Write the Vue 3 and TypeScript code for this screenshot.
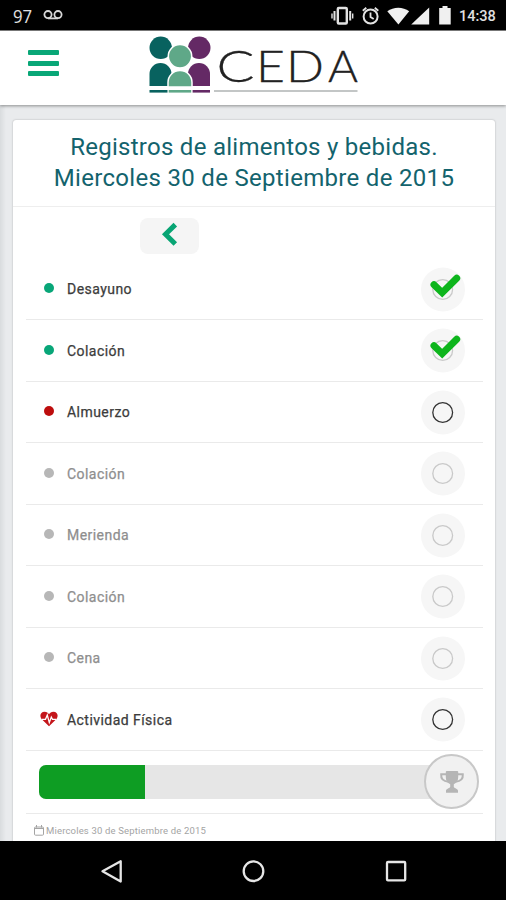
<script setup lang="ts">
type State = 'done' | 'open' | 'disabled'

interface Entry {
  label: string
  marker: 'green' | 'red' | 'grey' | 'heart'
  state: State
}

const entries: Entry[] = [
  { label: 'Desayuno', marker: 'green', state: 'done' },
  { label: 'Colación', marker: 'green', state: 'done' },
  { label: 'Almuerzo', marker: 'red', state: 'open' },
  { label: 'Colación', marker: 'grey', state: 'disabled' },
  { label: 'Merienda', marker: 'grey', state: 'disabled' },
  { label: 'Colación', marker: 'grey', state: 'disabled' },
  { label: 'Cena', marker: 'grey', state: 'disabled' },
  { label: 'Actividad Física', marker: 'heart', state: 'open' },
]

const progress = 26.4
</script>

<template>
  <div class="screen">
    <div class="status">
      <span class="temp">97</span>
      <svg class="voicemail" width="20" height="10" viewBox="0 0 20 10" fill="none" stroke="#d8d8d8" stroke-width="1.8">
        <circle cx="5" cy="4.6" r="3.6" /><circle cx="15" cy="4.6" r="3.6" /><path d="M5 8.4H15" />
      </svg>
      <svg class="system" width="120" height="20" viewBox="0 0 120 20">
        <g fill="none" stroke="#e2e2e2">
          <rect x="6.8" y="2" width="9" height="15.5" rx="1" stroke-width="2.4" />
          <path d="M3.5 5v9.500M19.200 5v9.500" stroke-width="2" />
          <path d="M1 7.500v5M21.700 7.500v5" stroke-width="1.4" />
          <circle cx="39.600" cy="10.500" r="7" stroke-width="2" />
          <path d="M39.500 6.500v4.500l3.200 2M31.800 4.800l3.500-3M47.300 4.800l-3.500-3" stroke-width="1.8" />
        </g>
        <g fill="#f0f0f0">
          <path d="M56.300 5.300C62.500.5 72 .5 78.200 5.300L67.400 18.500Z" />
          <path d="M98.200 1.500v17H80.200Z" />
          <path d="M111.500 0h5v2h3.200v16.500h-11.500V2h3.300Z" />
        </g>
      </svg>
      <span class="clock">14:38</span>
    </div>

    <header class="header">
      <button class="menu" aria-label="Menú"><i /><i /><i /></button>
      <svg class="logo" width="212" height="62" viewBox="0 0 212 62">
        <g fill="#08625f">
          <circle cx="12.700" cy="13.800" r="11.200" />
          <path d="M1.500 52V40a11 11 0 0 1 22 0V52Z" />
          <path d="M1.500 56h18v2.600h-18Z" />
        </g>
        <g fill="#642965">
          <circle cx="51.300" cy="13.800" r="11.200" />
          <path d="M40 52V40a11 11 0 0 1 22 0V52Z" />
          <path d="M44.600 56h17.400v2.600H44.600Z" />
        </g>
        <g fill="#5fa888" stroke="#fff" stroke-width="1.500">
          <circle cx="32" cy="22.200" r="11.700" />
          <path d="M20 53V48.500a12 12 0 0 1 24 0V53Z" />
        </g>
        <path d="M20.700 56h22.500v2.600H20.700Z" fill="#5fa888" />
        <path d="M66 57h143.500" stroke="#c3c6c6" stroke-width="1.800" />
        <g class="wordmark">
          <text x="68.500" y="47.500" textLength="38" lengthAdjust="spacingAndGlyphs">C</text>
          <text x="108" y="47.500" textLength="29" lengthAdjust="spacingAndGlyphs">E</text>
          <text x="138" y="47.500" textLength="38" lengthAdjust="spacingAndGlyphs">D</text>
          <text x="180" y="47.500" textLength="30" lengthAdjust="spacingAndGlyphs">A</text>
        </g>
      </svg>
    </header>

    <main class="content">
      <section class="card">
        <h1 class="title">
          <span class="line-one">Registros de alimentos y bebidas.</span>
          <span class="line-two">Miercoles 30 de Septiembre de 2015</span>
        </h1>
        <div class="pager">
          <button class="prev" aria-label="Anterior">
            <svg width="18" height="24" viewBox="0 0 18 24" fill="none" stroke="#08a574" stroke-width="5">
              <path d="M14.300 2.600L4.500 12.300L14.300 22" />
            </svg>
          </button>
        </div>
        <ul class="list">
          <li v-for="(entry, i) in entries" :key="i" class="row" :class="entry.state">
            <span class="marker">
              <svg v-if="entry.marker === 'heart'" width="18" height="16" viewBox="0 0 18 16">
                <path d="M9 15.300L1.500 7.900C-.8 5 .5.700 4.600.700C6.700.700 8 1.700 9 3.200C10 1.700 11.300.700 13.400.700C17.500.700 18.800 5 16.500 7.900Z" fill="#c4161b" />
                <path d="M2 8.300h3.500L7.300 4l2 7.600L11.300 6l1.200 2.300h3.500" fill="none" stroke="#fff" stroke-width="1.300" />
              </svg>
              <i v-else class="dot" :class="entry.marker" />
            </span>
            <span class="label">{{ entry.label }}</span>
            <span class="check">
              <svg width="44" height="52" viewBox="0 0 44 52">
                <circle cx="22" cy="26.500" r="22" fill="#f6f6f6" />
                <circle class="ring" cx="21.700" cy="26.500" r="9.900" />
                <path v-if="entry.state === 'done'" d="M13 21.800L21.200 29.700L35.700 15.300" fill="none" stroke="#0db51c" stroke-width="7" stroke-linecap="round" stroke-linejoin="miter" />
              </svg>
            </span>
          </li>
        </ul>
        <div class="goal">
          <div class="track"><div class="fill" :style="{ width: progress + '%' }" /></div>
          <div class="medal">
            <svg width="26" height="24" viewBox="0 0 26 24">
              <path d="M7 4.300H2.200C1.800 8.500 4.500 11.200 9.500 11.700M19 4.300h4.800C24.200 8.500 21.500 11.200 16.500 11.700" fill="none" stroke="#b5b5b5" stroke-width="2" />
              <path d="M6.800 2q0-1 1-1h10.400q1 0 1 1v5c0 3.500-1.500 5.800-4.400 7.200v2.600c0 1.600 4.200 1.700 4.200 4v2H7v-2c0-2.300 4.200-2.400 4.200-4v-2.600C8.300 12.800 6.800 10.500 6.800 7Z" fill="#b5b5b5" />
            </svg>
          </div>
        </div>
        <div class="date">
          <svg width="10" height="11" viewBox="0 0 10 11" fill="none" stroke="#a4a4a4">
            <rect x=".5" y="2" width="9" height="8.200" rx="1" /><path d="M.5 3.500h9M2.500 0v2.500M7.500 0v2.500" />
          </svg>
          <span>Miercoles 30 de Septiembre de 2015</span>
        </div>
      </section>
    </main>

    <nav class="nav">
      <svg width="506" height="59" viewBox="0 0 506 59" fill="none" stroke="#e6e6e6" stroke-width="2.300">
        <path d="M120.700 20.300V40.500L102.500 30.300Z" stroke-linejoin="round" />
        <circle cx="253.500" cy="30.200" r="9.800" />
        <rect x="387" y="21" width="18.200" height="18.400" rx="1" />
      </svg>
    </nav>
  </div>
</template>

<style>
body { margin: 0; background: #000; }
</style>

<style scoped>
.screen {
  width: 506px;
  height: 900px;
  display: flex;
  flex-direction: column;
  overflow: hidden;
  font-family: Roboto, "Liberation Sans", sans-serif;
}
.status {
  height: 30px;
  flex: none;
  display: flex;
  align-items: center;
  background: #000;
  color: #e0e0e0;
  padding: 0 9px 0 13px;
  box-sizing: border-box;
}
.temp { font: 18px/30px "Open Sans", sans-serif; transform: scaleX(.93); transform-origin: left; padding-top: 2px; }
.voicemail { margin-left: 9px; }
.system { margin-left: auto; margin-top: 1px; }
.clock { font-weight: 500; font-size: 14.500px; margin-left: 8px; padding-top: 3px; width: 38px; white-space: nowrap; }
.header {
  height: 75px;
  flex: none;
  display: flex;
  align-items: flex-start;
  box-sizing: border-box;
  background: #fff;
  border-top: 1px solid #777;
  box-shadow: 0 1px 3px rgba(0, 0, 0, .4);
  padding: 3px 0 0 28px;
  z-index: 1;
}
button { border: 0; padding: 0; background: none; }
.menu { width: 31px; margin-top: 16px; display: flex; flex-direction: column; gap: 5.500px; }
.menu i { height: 5px; background: #09a777; border-radius: 1px; }
.logo { margin-left: 89px; }
.wordmark {
  font-family: Lato, sans-serif;
  font-weight: 300;
  font-size: 44px;
  fill: #222;
  stroke: #222;
  stroke-width: .3;
}
.content {
  flex: 1;
  min-height: 0;
  overflow: hidden;
  background: linear-gradient(90deg, #d9dcde, #e9ebed 6px);
  padding: 15px 11px 0 13px;
}
.card {
  height: 740px;
  background: #fff;
  border-radius: 3px;
  box-shadow: 0 0 2px rgba(0, 0, 0, .28);
}
.title {
  height: 87px;
  box-sizing: border-box;
  margin: 0;
  padding-top: 12px;
  border-bottom: 1.500px solid #eee;
  color: #13636d;
  font-weight: 400;
  font-size: 24px;
  line-height: 31px;
  text-align: center;
  white-space: nowrap;
}
.title span { display: block; }
.line-one { letter-spacing: .27px; }
.line-two { letter-spacing: .31px; }
.pager { height: 51.500px; padding: 11px 0 0 127px; box-sizing: border-box; }
.prev {
  display: flex;
  justify-content: center;
  width: 59px;
  height: 36px;
  border-radius: 8px;
  background: #f5f5f5;
  padding-top: 4px;
}
.list { list-style: none; margin: 0 12px 0 13px; padding: 0; }
.row {
  height: 61.530px;
  box-sizing: border-box;
  border-bottom: 1.500px solid #eaeaea;
  display: flex;
  align-items: center;
  color: #3c3c3c;
}
.row.disabled { color: #8e8e8e; }
.marker { width: 18px; margin-left: 13.500px; display: flex; justify-content: center; }
.dot { width: 10px; height: 10px; border-radius: 50%; margin-top: -1px; }
.green { background: #08a678; }
.red { background: #bd0d0d; }
.grey { background: #b7b7b7; }
.label {
  margin-left: 9.500px;
  font-size: 14px;
  letter-spacing: .45px;
  padding-top: 1px;
  -webkit-text-stroke: .25px currentColor;
}
.check { margin-left: auto; margin-right: 18px; display: flex; }
.ring { fill: none; stroke: #333; stroke-width: 1.300; }
.done .ring, .disabled .ring { stroke: #c9c9c9; }
.goal {
  height: 63px;
  margin: 0 12px 0 13px;
  border-bottom: 1.500px solid #eaeaea;
  box-sizing: border-box;
  display: flex;
  align-items: center;
  padding-left: 13px;
}
.track { width: 402px; height: 34px; border-radius: 7px; background: #e6e6e6; overflow: hidden; }
.fill { height: 100%; background: #0e9d23; }
.medal {
  width: 55px;
  height: 55px;
  flex: none;
  box-sizing: border-box;
  margin-left: -17px;
  border: 2px solid #c8c8c8;
  border-radius: 50%;
  background: #f1f1f1;
  display: flex;
  align-items: center;
  justify-content: center;
}
.date {
  display: flex;
  align-items: center;
  gap: 2px;
  margin: 10px 0 0 21px;
  color: #a4a4a4;
  font-size: 9.500px;
  letter-spacing: .17px;
  line-height: 13px;
  white-space: nowrap;
}
.nav { height: 59px; flex: none; background: #000; }
.nav svg { display: block; }
</style>
